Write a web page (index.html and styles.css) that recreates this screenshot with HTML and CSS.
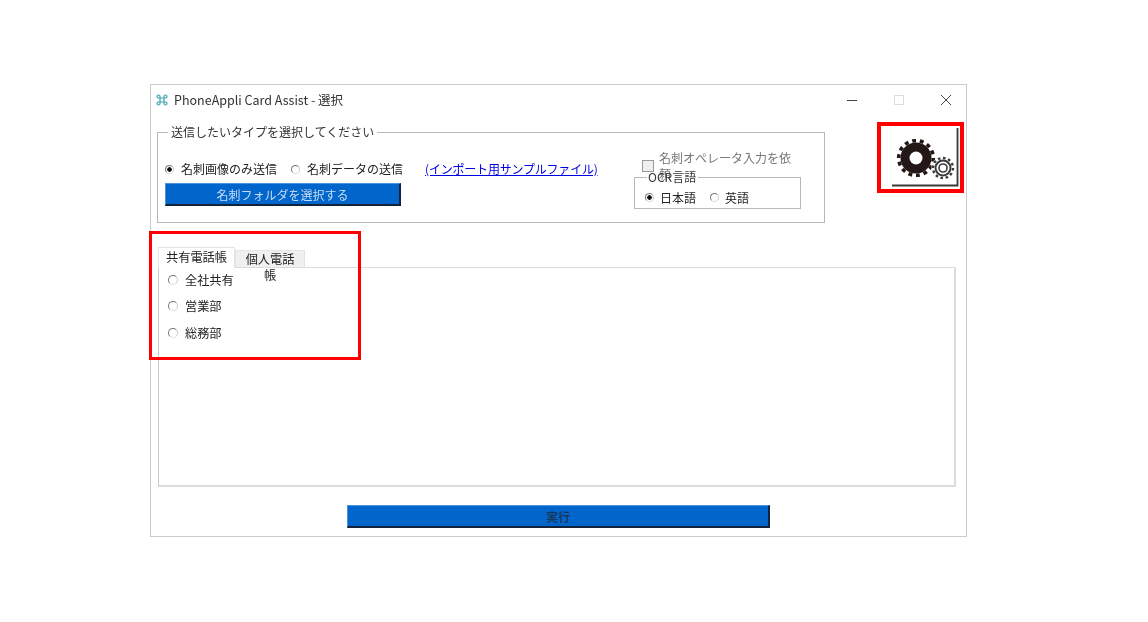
FILE: index.html
```html
<!DOCTYPE html>
<html lang="ja">

<head>
    <meta charset="UTF-8">
    <title>PhoneAppli Card Assist - 選択</title>
    <link rel="stylesheet" href="styles.css">
</head>

<body>
    <div class="window">
        <div class="titlebar">
            <svg class="app-icon" width="12" height="12" viewBox="0 0 12 12">
                <path d="M4 4H2.5a1.5 1.5 0 1 1 1.5-1.5V9.500a1.500 1.500 0 1 1-1.500-1.500H9.500a1.500 1.500 0 1 1-1.500 1.500V2.500a1.500 1.500 0 1 1 1.500 1.500H4" fill="none" stroke="#3aa6b4" stroke-width="1.200" />
            </svg>
            <span class="title">PhoneAppli Card Assist - 選択</span>
            <div class="controls">
                <svg width="12" height="12" viewBox="0 0 12 12"><path d="M1 6.500H11" stroke="#444" /></svg>
                <svg width="12" height="12" viewBox="0 0 12 12"><rect x="1.500" y="1.500" width="9" height="9" fill="none" stroke="#ddd" /></svg>
                <svg width="12" height="12" viewBox="0 0 12 12"><path d="M1 1L11 11M11 1L1 11" stroke="#444" /></svg>
            </div>
        </div>

        <div class="top-row">
            <fieldset class="group">
                <legend>送信したいタイプを選択してください</legend>
                <div class="group-left">
                    <div class="send-row">
                        <label class="radio-label"><span class="radio on"></span>名刺画像のみ送信</label>
                        <label class="radio-label"><span class="radio"></span>名刺データの送信</label>
                        <a class="sample-link" href="#">(インポート用サンプルファイル)</a>
                    </div>
                    <button class="btn btn-folder">名刺フォルダを選択する</button>
                </div>
                <div class="group-right">
                    <label class="check-label"><span class="check"></span>名刺オペレータ入力を依頼</label>
                    <fieldset class="ocr">
                        <legend>OCR言語</legend>
                        <label class="radio-label"><span class="radio on"></span>日本語</label>
                        <label class="radio-label"><span class="radio"></span>英語</label>
                    </fieldset>
                </div>
            </fieldset>

            <div class="gear-box">
                <svg width="80" height="62" viewBox="0 0 80 62">
                    <path d="M76.500 2V59.500H11" fill="none" stroke="#3a3a3a" stroke-width="1.800" />
                    <circle cx="35" cy="32" r="15.500" fill="#231815" />
                    <circle cx="35" cy="32" r="17.300" fill="none" stroke="#231815" stroke-width="3.600" pathLength="28" stroke-dasharray="1 1" />
                    <circle cx="35" cy="32" r="6.500" fill="#fff" />
                    <circle cx="62" cy="42" r="11.500" fill="#fff" />
                    <circle cx="62" cy="42" r="8.500" fill="#3a3a3a" />
                    <circle cx="62" cy="42" r="10" fill="none" stroke="#3a3a3a" stroke-width="2.400" pathLength="24" stroke-dasharray="1 1" />
                    <circle cx="62" cy="42" r="6.500" fill="#fff" />
                    <circle cx="62" cy="42" r="4.800" fill="#3a3a3a" />
                    <circle cx="62" cy="42" r="3.200" fill="#fff" />
                </svg>
            </div>
        </div>

        <div class="tabs">
            <div class="tab active">共有電話帳</div>
            <div class="tab">個人電話帳</div>
        </div>
        <div class="tab-panel">
            <label class="radio-label"><span class="radio"></span>全社共有</label>
            <label class="radio-label"><span class="radio"></span>営業部</label>
            <label class="radio-label"><span class="radio"></span>総務部</label>
        </div>

        <div class="footer">
            <button class="btn btn-run">実行</button>
        </div>

        <div class="highlight"></div>
    </div>
</body>

</html>
```
FILE: styles.css
```css
body {
    margin: 0;
    padding: 84px 0 0 150px;
    background-color: #fff;
    font-family: "Noto Sans CJK JP", "Noto Sans", sans-serif;
    font-size: 12px;
    color: #222;
    overflow: hidden;
}

.window {
    position: relative;
    width: 817px;
    height: 453px;
    box-sizing: border-box;
    border: 1px solid #ccc;
    filter: blur(0.35px);
}

.titlebar {
    display: flex;
    align-items: center;
    height: 29px;
    padding-left: 5px;
    box-sizing: border-box;
}

.app-icon {
    margin-right: 6px;
}

.title {
    font-size: 12.500px;
    color: #333;
}

.controls {
    display: flex;
    gap: 35px;
    margin-left: auto;
    margin-right: 14px;
}

.top-row {
    display: flex;
    align-items: flex-start;
    height: 125px;
    padding-left: 6px;
}

fieldset {
    margin: 0;
    min-width: 0;
    box-sizing: border-box;
}

.group {
    display: flex;
    justify-content: space-between;
    width: 668px;
    height: 99px;
    margin-top: 10px;
    padding: 20px 23px 0 7px;
    border: 1px solid #b8b8b8;
    line-height: 16px;
}

.group legend {
    margin-left: 3px;
    padding: 0 3px;
    color: #333;
}

.send-row {
    display: flex;
    align-items: center;
    height: 18px;
    margin-bottom: 5px;
}

.radio-label {
    display: flex;
    align-items: center;
}

.radio {
    width: 9px;
    height: 9px;
    flex: none;
    box-sizing: border-box;
    margin-right: 6px;
    border: 1px solid #777;
    border-right-color: #ccc;
    border-bottom-color: #ddd;
    border-radius: 50%;
    background: #fff;
}

.radio.on {
    background: radial-gradient(circle, #111 0 2px, #fff 2.500px);
}

.send-row .radio-label {
    margin-right: 14px;
}

.send-row .radio {
    margin-left: 0;
    margin-right: 7px;
}

.sample-link {
    margin-left: 8px;
    color: #0000e6;
    letter-spacing: -0.200px;
}

.btn {
    display: block;
    padding: 0;
    border: 0;
    border-top: 1px solid #4a94e0;
    border-left: 1px solid #4a94e0;
    border-right: 2px solid #14233c;
    border-bottom: 2px solid #14233c;
    background-color: #0066cc;
    font-family: inherit;
    font-size: 12px;
}

.btn-folder {
    width: 236px;
    height: 23px;
    color: #c9dcf2;
}

.group-right {
    width: 167px;
    margin-top: -3px;
}

.check-label {
    display: flex;
    align-items: center;
    height: 18px;
    margin-left: 8px;
    color: #777;
}

.check {
    width: 12px;
    height: 12px;
    box-sizing: border-box;
    margin-right: 5px;
    border: 1px solid #999;
    background: #f0f0f0;
}

.ocr {
    display: flex;
    gap: 14px;
    height: 39px;
    margin-top: -5px;
    padding: 3px 0 0 10px;
    border: 1px solid #b8b8b8;
}

.ocr legend {
    margin-left: 2px;
    padding: 0 2px 0 1px;
    line-height: 14px;
}

.gear-box {
    width: 87px;
    height: 71px;
    box-sizing: border-box;
    margin: 8px 0 0 52px;
    border: 4px solid #f00;
    overflow: hidden;
}

.gear-box svg {
    display: block;
}

.tabs {
    display: flex;
    align-items: flex-end;
    height: 22px;
    padding-left: 7px;
    margin-top: 6px;
}

.tab {
    height: 17px;
    padding: 0 4px;
    width: 70px;
    box-sizing: border-box;
    border: 1px solid #e4e4e4;
    border-bottom: 0;
    background-color: #f0f0f0;
    font-size: 12.200px;
    line-height: 16px;
    text-align: center;
}

.tab.active {
    width: 77px;
    height: 21px;
    margin-bottom: -1px;
    background-color: #fff;
    position: relative;
    line-height: 18px;
}

.tab-panel {
    width: 798px;
    height: 220px;
    box-sizing: border-box;
    margin-left: 7px;
    padding: 4px 0 0 9px;
    border: 1px solid #dcdcdc;
    border-left-color: #c8c8c8;
    border-right-width: 2px;
    border-bottom-width: 2px;
    font-size: 12.200px;
}

.tab-panel .radio-label {
    height: 16px;
}

.tab-panel .radio-label + .radio-label {
    margin-top: 10px;
}

.tab-panel .radio-label:last-child {
    margin-top: 11px;
}

.tab-panel .radio {
    width: 10px;
    height: 10px;
    margin-right: 7px;
}

.footer {
    display: flex;
    margin-top: 18px;
    padding-left: 196px;
}

.btn-run {
    width: 423px;
    height: 23px;
    color: #17365f;
    font-weight: 700;
}

.highlight {
    position: absolute;
    left: -2px;
    top: 146px;
    width: 212px;
    height: 129px;
    box-sizing: border-box;
    border: 3px solid #f00;
}
```
